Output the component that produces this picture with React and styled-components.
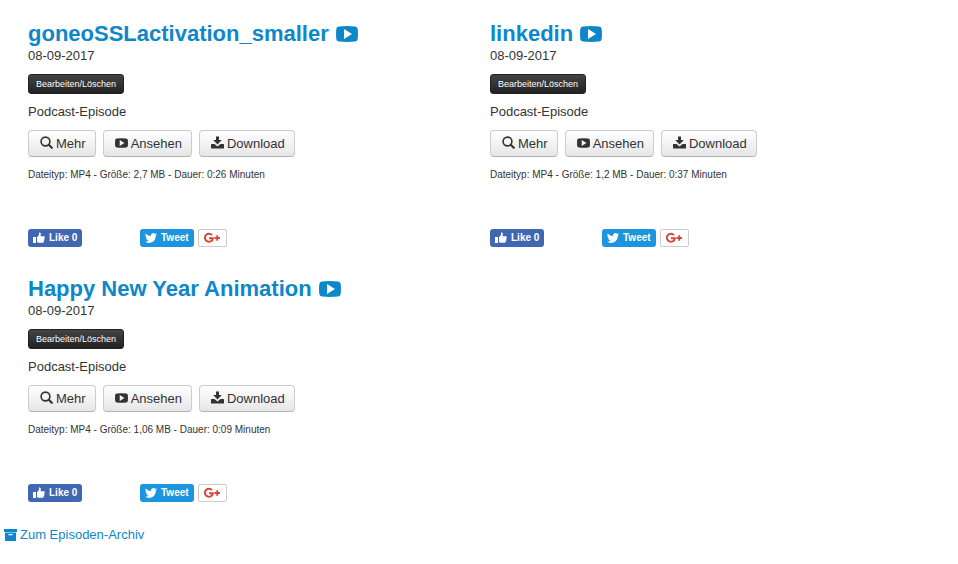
import React from 'react';
import styled, { createGlobalStyle } from 'styled-components';

const GlobalStyle = createGlobalStyle`
  body {
    margin: 0;
    background: #fff;
    color: #333;
    font: 13px/18px "Liberation Sans", Arial, sans-serif;
  }
`;

const Page = styled.main`
  padding: 21px 6px 20px 4px;
`;

const Episodes = styled.section`
  display: grid;
  grid-template-columns: 1fr 1fr;
  row-gap: 29px;
  padding-left: 24px;
`;

const Icon = styled.svg`
  width: ${p => p.$width || 13}px;
  height: ${p => p.$height || 13}px;
  flex: none;
  fill: currentColor;
`;

const Title = styled.h2`
  margin: 0;
  font-size: 22px;
  line-height: 26px;
`;

const TitleLink = styled.a`
  display: inline-flex;
  align-items: center;
  gap: 7px;
  color: #0d87ca;
  text-decoration: none;
`;

const Text = styled.p`
  margin: 0 0 9px;
`;

const EditButton = styled.button`
  display: block;
  height: 20px;
  margin-bottom: 9px;
  padding: 0 7px;
  border: 1px solid #222;
  border-radius: 3px;
  background: linear-gradient(#444, #222);
  color: #fff;
  font: 9px/18px "Liberation Sans", Arial, sans-serif;
`;

const Actions = styled.div`
  display: flex;
  gap: 7px;
  margin-bottom: 9px;
`;

const ActionButton = styled.button`
  display: flex;
  align-items: center;
  gap: 3px;
  height: 27px;
  padding: 0 9px 0 11px;
  border: 1px solid #ccc;
  border-bottom-color: #b3b3b3;
  border-radius: 4px;
  background: linear-gradient(#fff, #e6e6e6);
  color: #333;
  font: inherit;

  svg {
    margin-bottom: 2px;
  }
`;

const Details = styled.small`
  display: block;
  font-size: 10px;
`;

const Social = styled.div`
  display: flex;
  align-items: flex-start;
  margin-top: 45px;
`;

const LikeSlot = styled.div`
  width: 112px;
`;

const SocialButton = styled.button`
  display: flex;
  align-items: center;
  gap: 4px;
  height: 18px;
  padding: 0 5px;
  border: 0;
  border-radius: 3px;
  background: ${p => p.$color};
  color: #fff;
  font: bold 10px/18px "Liberation Sans", Arial, sans-serif;
`;

const PlusButton = styled(SocialButton)`
  margin-left: 4px;
  border: 1px solid #ccc;
  border-radius: 2px;
  color: #db4437;
`;

const ArchiveLink = styled.a`
  display: inline-flex;
  align-items: center;
  gap: 3px;
  margin-top: 24px;
  color: #0d87ca;
  text-decoration: none;
`;

const episodes = [
  { title: 'goneoSSLactivation_smaller', size: '2,7', duration: '0:26' },
  { title: 'linkedin', size: '1,2', duration: '0:37' },
  { title: 'Happy New Year Animation', size: '1,06', duration: '0:09' },
];

const PlayIcon = props => (
  <Icon viewBox="0 0 22 16" aria-hidden="true" {...props}>
    <path
      fillRule="evenodd"
      d="M3 .4Q11-.4 19 .4Q21.500.8 21.700 3Q22.200 8 21.700 13Q21.500 15.200 19 15.600Q11 16.400 3 15.600Q.5 15.200.3 13Q-.2 8 .3 3Q.5.8 3 .4ZM8 3V13L16 8Z"
    />
  </Icon>
);

const SearchIcon = () => (
  <Icon viewBox="0 0 13 13" aria-hidden="true">
    <circle cx="5.5" cy="5.5" r="4.400" fill="none" stroke="currentColor" strokeWidth="1.600" />
    <path d="M8.800 8.800l3 3" stroke="currentColor" strokeWidth="2.200" strokeLinecap="round" />
  </Icon>
);

const DownloadIcon = () => (
  <Icon viewBox="0 0 13 13" aria-hidden="true">
    <path d="M5 .5h3V4h2.800L6.500 8.500 2.200 4H5zM.5 8h3l3 2.500 3-2.500h3q.5 0 .5.500V12q0 .5-.5.500H.5Q0 12.500 0 12V8.500Q0 8 .5 8z" />
  </Icon>
);

const ThumbIcon = () => (
  <Icon viewBox="0 0 12 12" $width={12} $height={12} aria-hidden="true">
    <path d="M0 5h3v6H0zM4 5.200L6 3V.8C6 .2 7.900.2 7.900 2.200L7.500 4.200H11c1 0 1 1.500.3 1.700.6.400.4 1.400-.2 1.600.4.600.1 1.300-.4 1.500.3.800-.2 1.700-1 1.700H6L4 10.200z" />
  </Icon>
);

const BirdIcon = () => (
  <Icon viewBox="0 0 24 24" $width={12} $height={12} aria-hidden="true">
    <path d="M23.950 4.570a10 10 0 0 1-2.820.77 4.960 4.960 0 0 0 2.160-2.720c-.95.560-2 .96-3.130 1.180a4.920 4.920 0 0 0-8.380 4.480C7.690 8.090 4.070 6.130 1.640 3.160a4.920 4.920 0 0 0 1.520 6.570 4.900 4.900 0 0 1-2.230-.61v.06a4.920 4.920 0 0 0 3.950 4.830 5 5 0 0 1-2.210.08 4.940 4.940 0 0 0 4.600 3.420A9.870 9.870 0 0 1 0 19.540a13.990 13.990 0 0 0 7.550 2.210c9.050 0 14-7.500 14-13.980 0-.21 0-.42-.02-.63a9.940 9.940 0 0 0 2.460-2.550z" />
  </Icon>
);

const PlusIcon = () => (
  <Icon viewBox="0 0 17 12" $width={17} $height={12} aria-hidden="true">
    <path
      d="M8 3.200A4 4 0 1 0 8.900 6.300H5M10.500 6h5.500M13.250 3.250v5.500"
      fill="none"
      stroke="currentColor"
      strokeWidth="1.900"
    />
  </Icon>
);

const ArchiveIcon = () => (
  <Icon viewBox="0 0 13 12" $height={12} aria-hidden="true">
    <path fillRule="evenodd" d="M0 0h13v3H0zM1 3.500h11V12H1zM4.500 5v1.200h4V5z" />
  </Icon>
);

const Episode = ({ title, size, duration }) => (
  <article>
    <Title>
      <TitleLink href="#">
        {title}
        <PlayIcon $width={22} $height={16} />
      </TitleLink>
    </Title>
    <Text>08-09-2017</Text>
    <EditButton type="button">Bearbeiten/Löschen</EditButton>
    <Text>Podcast-Episode</Text>
    <Actions>
      <ActionButton type="button">
        <SearchIcon />
        Mehr
      </ActionButton>
      <ActionButton type="button">
        <PlayIcon $height={10} />
        Ansehen
      </ActionButton>
      <ActionButton type="button">
        <DownloadIcon />
        Download
      </ActionButton>
    </Actions>
    <Details>
      Dateityp: MP4 - Größe: {size} MB - Dauer: {duration} Minuten
    </Details>
    <Social>
      <LikeSlot>
        <SocialButton type="button" $color="#4267b2">
          <ThumbIcon />
          Like 0
        </SocialButton>
      </LikeSlot>
      <SocialButton type="button" $color="#1b95e0">
        <BirdIcon />
        Tweet
      </SocialButton>
      <PlusButton type="button" $color="#fff" aria-label="Google Plus">
        <PlusIcon />
      </PlusButton>
    </Social>
  </article>
);

const App = () => (
  <>
    <GlobalStyle />
    <Page>
      <Episodes>
        {episodes.map(e => (
          <Episode key={e.title} {...e} />
        ))}
      </Episodes>
      <ArchiveLink href="#">
        <ArchiveIcon />
        Zum Episoden-Archiv
      </ArchiveLink>
    </Page>
  </>
);

export default App;
